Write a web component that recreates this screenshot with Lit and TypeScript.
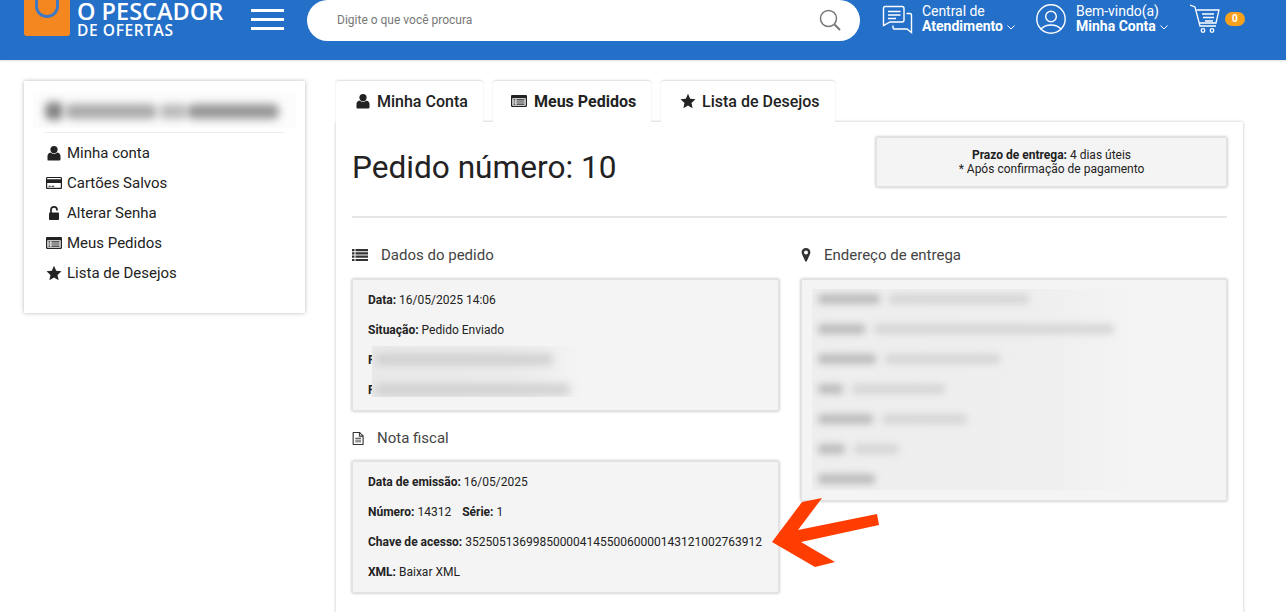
import { LitElement, html, css } from "lit";
import { customElement } from "lit/decorators.js";

const iUser = html`<svg class="ic" viewBox="0 0 16 16"><circle cx="8" cy="4.600" r="3.600" fill="currentColor"/><path d="M1.500 14.600V11c0-2 1.300-3.300 3-3.600 1 .9 2.100 1.300 3.500 1.300s2.500-.4 3.500-1.300c1.700.3 3 1.600 3 3.600v3.600c0 .5-.4.900-1 .9H2.500c-.6 0-1-.4-1-.9z" fill="currentColor"/></svg>`;
const iCard = html`<svg class="ic" viewBox="0 0 16 16"><path fill-rule="evenodd" d="M1.300 2h13.400c.7 0 1.300.6 1.300 1.300v9.400c0 .7-.6 1.300-1.300 1.300H1.300C.6 14 0 13.400 0 12.700V3.300C0 2.600.6 2 1.300 2zM1.200 8v4.500c0 .2.100.3.300.3h13c.2 0 .3-.1.300-.3V8zM1.200 3.400v.8h13.600v-.8c0-.2-.1-.3-.3-.3h-13c-.2 0-.3.100-.3.300z" fill="currentColor"/><path d="M2.500 10.700h2.200v1H2.500zM5.500 10.700h2.800v1H5.500z" fill="currentColor"/></svg>`;
const iLock = html`<svg class="ic" viewBox="0 0 16 16"><rect x="3" y="7.500" width="10" height="7.500" rx=".9" fill="currentColor"/><path d="M5 8V4.800c0-1.700 1.300-3 3-3s3 1.300 3 3v.8" fill="none" stroke="currentColor" stroke-width="1.700"/></svg>`;
const iList = html`<svg class="ic" viewBox="0 0 16 16"><path fill-rule="evenodd" d="M1.200 2h13.600c.7 0 1.200.5 1.200 1.200v9.600c0 .7-.5 1.200-1.200 1.200H1.200C.5 14 0 13.500 0 12.800V3.200C0 2.500.5 2 1.200 2zM1.300 5.200v7.200c0 .2.100.3.300.3h12.800c.2 0 .3-.1.300-.3V5.200z" fill="currentColor"/><path d="M2.400 6.200h2v1.200h-2zM5.400 6.200h8.200v1.200H5.400zM2.400 8.400h2v1.200h-2zM5.400 8.400h8.200v1.200H5.400zM2.400 10.600h2v1.200h-2zM5.400 10.600h8.200v1.200H5.400z" fill="currentColor"/></svg>`;
const iStar = html`<svg class="ic" viewBox="0 0 16 16"><path d="M8 .8l2.200 4.900 5.300.6-4 3.600 1.100 5.300L8 12.500l-4.600 2.700 1.100-5.300-4-3.600 5.300-.6z" fill="currentColor"/></svg>`;
const iLines = html`<svg class="ic" viewBox="0 0 16 16"><path d="M0 2h2.500v2.200H0zM3.500 2H16v2.200H3.500zM0 5.300h2.500v2.200H0zM3.500 5.300H16v2.200H3.500zM0 8.600h2.500v2.200H0zM3.500 8.600H16v2.200H3.500zM0 11.900h2.500v2.200H0zM3.500 11.900H16v2.200H3.500z" fill="currentColor"/></svg>`;
const iPin = html`<svg class="ic" viewBox="0 0 16 16"><path fill-rule="evenodd" d="M8 1c2.500 0 4.400 1.900 4.400 4.300 0 1-.3 1.600-.7 2.500L8.900 14c-.2.500-.6.800-.9.800s-.7-.3-.9-.8L4.300 7.800c-.4-.9-.7-1.500-.7-2.500C3.600 2.900 5.500 1 8 1zm0 2.400a2 2 0 1 0 0 4 2 2 0 0 0 0-4z" fill="currentColor"/></svg>`;
const iFile = html`<svg class="ic" viewBox="0 0 16 16"><path fill-rule="evenodd" d="M2.500 1h7l4 4v9.200c0 .5-.3.800-.8.800H2.500c-.5 0-.8-.3-.8-.8V1.800c0-.5.300-.8.800-.8zM2.900 2.200v11.600h9.400V6H9c-.4 0-.6-.2-.6-.6V2.200zM9.500 2.700v2.200h2.200z" fill="currentColor"/><path d="M4.500 7.300h6.200v1H4.500zM4.500 9.200h6.200v1H4.500zM4.500 11.100h6.200v1H4.500z" fill="currentColor"/></svg>`;

const chevron = html`<svg viewBox="0 0 8 5" fill="none" stroke="#fff"><path d="M.5.500l3.500 3.500 3.500-3.500"/></svg>`;

const sideItems = [
  [iUser, "Minha conta"],
  [iCard, "Cartões Salvos"],
  [iLock, "Alterar Senha"],
  [iList, "Meus Pedidos"],
  [iStar, "Lista de Desejos"],
] as const;

const tabs = [
  [iUser, "Minha Conta"],
  [iList, "Meus Pedidos"],
  [iStar, "Lista de Desejos"],
] as const;

const addressBlur = [
  [62, 140],
  [47, 240],
  [58, 115],
  [25, 93],
  [55, 85],
  [27, 45],
  [57, 0],
];

@customElement("app-root")
export class AppRoot extends LitElement {
  static styles = css`
    :host { display: block; height: 612px; overflow: hidden; position: relative; background: #fff;
      font-family: Roboto, "Liberation Sans", sans-serif; color: #222; }
    * { box-sizing: border-box; }
    .ic { width: 16px; height: 16px; display: block; flex: none; }

    header { height: 60px; background: #2470c9; display: flex; align-items: flex-start; color: #fff;
      box-shadow: 0 1px 2px rgba(0,0,0,.12); position: relative; }
    .bag { width: 46px; height: 36px; margin-left: 24px; flex: none; display: block; }
    .brand { margin-left: 7px; width: 147px; flex: none; font-family: "Open Sans", sans-serif; font-weight: 600; white-space: nowrap; }
    .brand b { display: block; font-weight: 600; font-size: 23.500px; line-height: 23px; }
    .brand span { display: block; font-size: 15.500px; line-height: 15px; letter-spacing: .6px; }
    .burger { margin: 9px 0 0 27px; width: 33px; flex: none; display: flex; flex-direction: column; gap: 6px; }
    .burger i { display: block; height: 3px; background: #fff; }
    .search { margin-left: 23px; width: 553px; height: 41px; flex: none; background: #fff; border-radius: 21px;
      display: flex; align-items: center; justify-content: space-between;
      padding: 0 18px 2px 30px; font-size: 12px; color: #777; }
    .search svg { width: 24px; height: 24px; display: block; }
    .act { display: flex; align-items: center; flex: none; height: 38px; }
    .act .txt { font-size: 14px; line-height: 15px; margin-left: 10px; white-space: nowrap; letter-spacing: -.05px; }
    .a1 .txt { margin-left: 9px; }
    .act .txt strong { font-weight: 700; display: block; letter-spacing: 0; }
    .act .txt strong svg { width: 8px; height: 5px; display: inline-block; margin-left: 4px; vertical-align: 1px; }
    .a1 { margin-left: 22px; }
    .a2 { margin-left: 21px; }
    .a3 { margin-left: 22px; }
    .act > svg { display: block; flex: none; }
    .badge { margin-left: 5px; width: 20px; height: 14px; border-radius: 7px; background: #f7a11c; color: #fff; font-size: 10px;
      font-weight: 700; text-align: center; line-height: 14px; }

    main { display: flex; align-items: flex-start; padding: 21px 0 0 24px; }
    .side { width: 281px; height: 232px; flex: none; background: #fff; box-shadow: 0 0 4px rgba(0,0,0,.28); padding: 11px 20px 0; }
    .who { height: 36px; margin: 0 -11px 4px; position: relative; overflow: hidden; background: #fcfcfc; }
    .who i { position: absolute; top: 12px; height: 15px; background: #9d9d9d; filter: blur(4px); border-radius: 6px; }
    .who .w1 { left: 12px; width: 18px; height: 18px; top: 10px; background: #828282; }
    .who .w2 { left: 32px; width: 92px; background: #aaaaaa; }
    .who .w3 { left: 126px; width: 28px; background: #bbbbbb; }
    .who .w4 { left: 154px; width: 92px; background: #969696; }
    .side hr { border: 0; height: 1px; background: #eee; margin: 0; }
    .side ul { list-style: none; margin: 5px 0 0; padding: 0; }
    .side li { display: flex; align-items: center; height: 30px; font-size: 15px; color: #222; }
    .side li .ic { margin: 0 5px 0 2px; }

    .col { margin-left: 31px; width: 907px; flex: none; }
    .tabs { display: flex; gap: 10px; height: 41px; position: relative; z-index: 1; }
    .tab { display: flex; align-items: center; gap: 6px; height: 41px; background: #fff; font-size: 16px; font-weight: 500;
      border-radius: 3px 3px 0 0; box-shadow: 0 -1px 2px rgba(0,0,0,.14); white-space: nowrap; padding: 0 0 1px 19px; }
    .tab.t0 { width: 147px; } .tab.t1 { width: 158px; font-weight: 700; padding-left: 18px; gap: 7px; } .tab.t2 { width: 174px; }
    .panel { background: #fff; box-shadow: 0 0 3px rgba(0,0,0,.25); padding: 15px 16px 40px; height: 520px; }
    .top { display: flex; justify-content: space-between; align-items: flex-start; height: 81px; border-bottom: 2px solid #e6e6e6; }
    h1 { margin: 12px 0 0; font-size: 31.600px; font-weight: 400; line-height: 38px; color: #222; }
    .box { background: #f4f4f4; border: 1px solid #e2e2e2; box-shadow: 0 0 3px rgba(0,0,0,.3); font-size: 12px; color: #222; }
    .box b { font-weight: 700; }
    .prazo { width: 351px; height: 50px; text-align: center; line-height: 14px; padding-top: 10px; }
    .grid { display: grid; grid-template-columns: 427px 426px; column-gap: 22px; margin-top: 25px; }
    h2 { display: flex; align-items: center; margin: 0; height: 24px; font-size: 15px; font-weight: 400; color: #444; }
    h2 .ic { color: #333; }
    .h-a .ic { margin-right: 13px; }
    .h-b { margin-top: 15px; }
    .h-b .ic { margin: 0 11px 0 -1px; width: 15px; height: 15px; }
    .h-c .ic { margin: 0 10px 0 -3px; }
    .rows { position: relative; margin-top: 12px; padding: 5px 15px 5px; }
    .h-b + .rows { margin-top: 11px; }
    .row { height: 30px; line-height: 30px; white-space: nowrap; }
    .spaced { margin-left: 8px; }
    .mask { position: absolute; left: 19px; top: 66px; width: 212px; height: 51px; overflow: hidden;
      background: linear-gradient(90deg, #e9e9e9 0%, #ebebeb 65%, #f4f4f4 100%); }
    .mask i { position: absolute; left: 3px; height: 11px; background: #cfcfcf; filter: blur(4px); border-radius: 4px; }
    .addr { height: 222px; margin-top: 12px; padding: 9px 10px; }
    .inner { height: 201px; width: 330px; overflow: hidden; padding-left: 6px;
      background: linear-gradient(90deg, #eeeeee 0%, #efefef 70%, #f4f4f4 100%); }
    .line { height: 30px; display: flex; align-items: center; gap: 9px; flex: none; }
    .line:first-child { margin-top: -5px; }
    .line i { display: block; height: 10px; background: #bcbcbc; filter: blur(3.500px); border-radius: 4px; flex: none; }
    .line i + i { background: #d6d6d6; }
    .arrow { position: absolute; left: 770px; top: 496px; width: 112px; height: 74px; }
  `;

  render() {
    return html`
      <header>
        <svg class="bag" viewBox="0 0 46 36"><path d="M0 0h46v33.500c0 1.400-1.100 2.500-2.500 2.500h-41C1.100 36 0 34.900 0 33.500z" fill="#f4871f"/><path d="M11 0v6c0 6.600 5.400 12 12 12s12-5.400 12-12V0h-3v6c0 5-4 9-9 9s-9-4-9-9V0z" fill="#3f78c4"/></svg>
        <div class="brand"><b>O PESCADOR</b><span>DE OFERTAS</span></div>
        <div class="burger"><i></i><i></i><i></i></div>
        <div class="search"><span>Digite o que você procura</span>
          <svg viewBox="0 0 24 24" fill="none" stroke="#777" stroke-width="1.500"><circle cx="10.500" cy="10.500" r="8"/><path d="M16.500 16.500l5.500 5.500" stroke-width="2"/></svg>
        </div>
        <div class="act a1">
          <svg width="31" height="30" viewBox="0 0 31 30" fill="none" stroke="#fff" stroke-width="1.400"><path d="M3 2.500h17c1.100 0 2 .9 2 2v11.500c0 1.100-.9 2-2 2H8l-6.500 3.500V4c0-.8.700-1.500 1.500-1.500z"/><path d="M6 7.500h12.500M6 11h12.500M6 14.500h8"/><path d="M24.500 9.500H28c1 0 1.500.7 1.500 1.500v17.500l-4.500-3.500H12.500c-1 0-1.500-.5-1.500-1.500v-2"/></svg>
          <div class="txt">Central de<strong>Atendimento${chevron}</strong></div>
        </div>
        <div class="act a2">
          <svg width="30" height="30" viewBox="0 0 30 30" fill="none" stroke="#fff" stroke-width="1.400"><circle cx="15" cy="15" r="14.200"/><circle cx="15" cy="12.500" r="5.300"/><path d="M4.500 25.500c2.500-3 6-4.500 10.500-4.500s8 1.500 10.500 4.500"/></svg>
          <div class="txt">Bem-vindo(a)<strong>Minha Conta${chevron}</strong></div>
        </div>
        <div class="act a3">
          <svg width="30" height="30" viewBox="0 0 30 30" fill="none" stroke="#fff" stroke-width="1.300"><path d="M0 1l5 2 5 19h16"/><path d="M6.500 6H29l-3 13H9.500"/><path d="M12 10h12M13 13.500h11M15 17h8"/><circle cx="13" cy="26.500" r="1.800"/><circle cx="22" cy="26.500" r="1.800"/></svg>
          <span class="badge">0</span>
        </div>
      </header>

      <main>
        <aside class="side">
          <div class="who"><i class="w1"></i><i class="w2"></i><i class="w3"></i><i class="w4"></i></div>
          <hr />
          <ul>${sideItems.map(([ic, t]) => html`<li>${ic}<span>${t}</span></li>`)}</ul>
        </aside>
        <section class="col">
          <nav class="tabs">
            ${tabs.map(([ic, t], i) => html`<div class="tab t${i}">${ic}<span>${t}</span></div>`)}
          </nav>
          <div class="panel">
            <div class="top">
              <h1>Pedido número: 10</h1>
              <div class="box prazo"><b>Prazo de entrega:</b> 4 dias úteis<br />* Após confirmação de pagamento</div>
            </div>
            <div class="grid">
              <div>
                <h2 class="h-a">${iLines}<span>Dados do pedido</span></h2>
                <div class="box rows">
                  <div class="row"><b>Data:</b> 16/05/2025 14:06</div>
                  <div class="row"><b>Situação:</b> Pedido Enviado</div>
                  <div class="row"><b>F</b></div>
                  <div class="row"><b>F</b></div>
                  <div class="mask">
                    <i style="top:8px;width:178px"></i>
                    <i style="top:38px;width:195px"></i>
                  </div>
                </div>
                <h2 class="h-b">${iFile}<span>Nota fiscal</span></h2>
                <div class="box rows">
                  <div class="row"><b>Data de emissão:</b> 16/05/2025</div>
                  <div class="row"><b>Número:</b> 14312 <b class="spaced">Série:</b> 1</div>
                  <div class="row"><b>Chave de acesso:</b> 35250513699850000414550060000143121002763912</div>
                  <div class="row"><b>XML:</b> Baixar XML</div>
                </div>
              </div>
              <div>
                <h2 class="h-c">${iPin}<span>Endereço de entrega</span></h2>
                <div class="box addr">
                  <div class="inner">
                    ${addressBlur.map(([a, b]) => html`<div class="line"><i style="width:${a}px"></i>${b ? html`<i style="width:${b}px"></i>` : ""}</div>`)}
                  </div>
                </div>
              </div>
            </div>
          </div>
        </section>
      </main>
      <svg class="arrow" viewBox="770 496 112 74"><path d="M772 542L802 502 822 498 798 530 877 514 879 525 801 542 835 562 815 567z" fill="#ff3d00"/></svg>
    `;
  }
}
